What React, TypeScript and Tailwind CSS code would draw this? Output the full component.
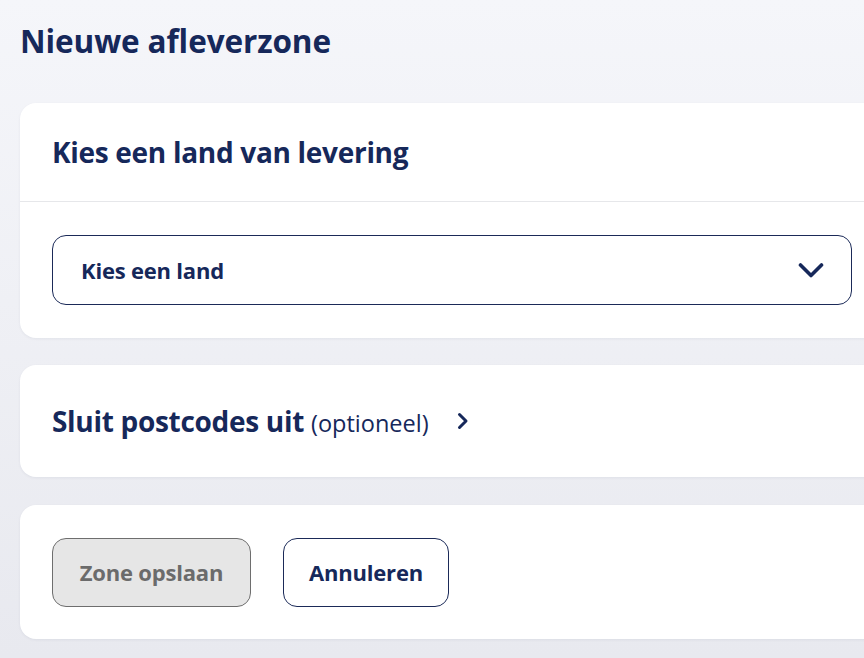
const font = { fontFamily: '"Open Sans", "Noto Sans", sans-serif' };

function Chevron({ dir }: { dir: "down" | "right" }) {
  if (dir === "down") {
    return (
      <svg width="26" height="17" viewBox="0 0 26 17" fill="none" className="shrink-0">
        <polyline
          points="2.5,3 13,13.5 23.5,3"
          stroke="currentColor"
          strokeWidth="3.6"
          strokeLinecap="round"
          strokeLinejoin="round"
        />
      </svg>
    );
  }
  return (
    <svg width="12" height="18" viewBox="0 0 12 18" fill="none" className="shrink-0">
      <polyline
        points="2.5,2.5 9,9 2.5,15.5"
        stroke="currentColor"
        strokeWidth="3"
        strokeLinecap="round"
        strokeLinejoin="round"
      />
    </svg>
  );
}

export default function App() {
  return (
    <div
      className="h-[658px] w-[864px] overflow-hidden bg-gradient-to-b from-[#f5f6fa] to-[#e8e9ef] pl-5 text-[#16285a]"
      style={font}
    >
      <h1 className="flex h-[86px] items-center pb-1 text-[31.5px] font-bold tracking-[-0.1px]">
        Nieuwe afleverzone
      </h1>

      <div className="mt-[17px] flex w-[880px] flex-col gap-[27px]">
        {/* land */}
        <section className="rounded-2xl bg-white shadow-[0_1px_3px_rgba(20,30,70,0.06)]">
          <div className="flex h-[99px] items-center border-b border-[#e6e7ea] px-8">
            <h2 className="text-[28px] font-bold tracking-[-0.3px]">Kies een land van levering</h2>
          </div>
          <div className="px-8 py-[33px]">
            <button className="flex h-[70px] w-[800px] items-center justify-between rounded-[14px] border border-[#1b2a58] bg-white pl-7 pr-[27px]">
              <span className="text-[22px] font-bold tracking-[-0.2px]">Kies een land</span>
              <Chevron dir="down" />
            </button>
          </div>
        </section>

        {/* postcodes */}
        <section className="flex h-[112px] items-center gap-[28px] rounded-2xl bg-white px-8 shadow-[0_1px_3px_rgba(20,30,70,0.06)]">
          <h2 className="text-[28px] font-bold tracking-[-0.3px]">
            Sluit postcodes uit{" "}
            <span className="text-[23.5px] font-normal tracking-normal">(optioneel)</span>
          </h2>
          <Chevron dir="right" />
        </section>

        {/* acties */}
        <section className="mt-px flex h-[134px] items-center gap-8 rounded-2xl bg-white px-8 shadow-[0_1px_3px_rgba(20,30,70,0.06)]">
          <button
            disabled
            className="h-[69px] w-[199px] rounded-[14px] border border-[#6e6e6e] bg-[#e6e6e6] text-[22px] font-bold tracking-[-0.2px] text-[#6b6b6b]"
          >
            Zone opslaan
          </button>
          <button className="h-[69px] w-[166px] rounded-[14px] border border-[#1b2a58] bg-white text-[22px] font-bold tracking-[-0.2px]">
            Annuleren
          </button>
        </section>
      </div>
    </div>
  );
}
